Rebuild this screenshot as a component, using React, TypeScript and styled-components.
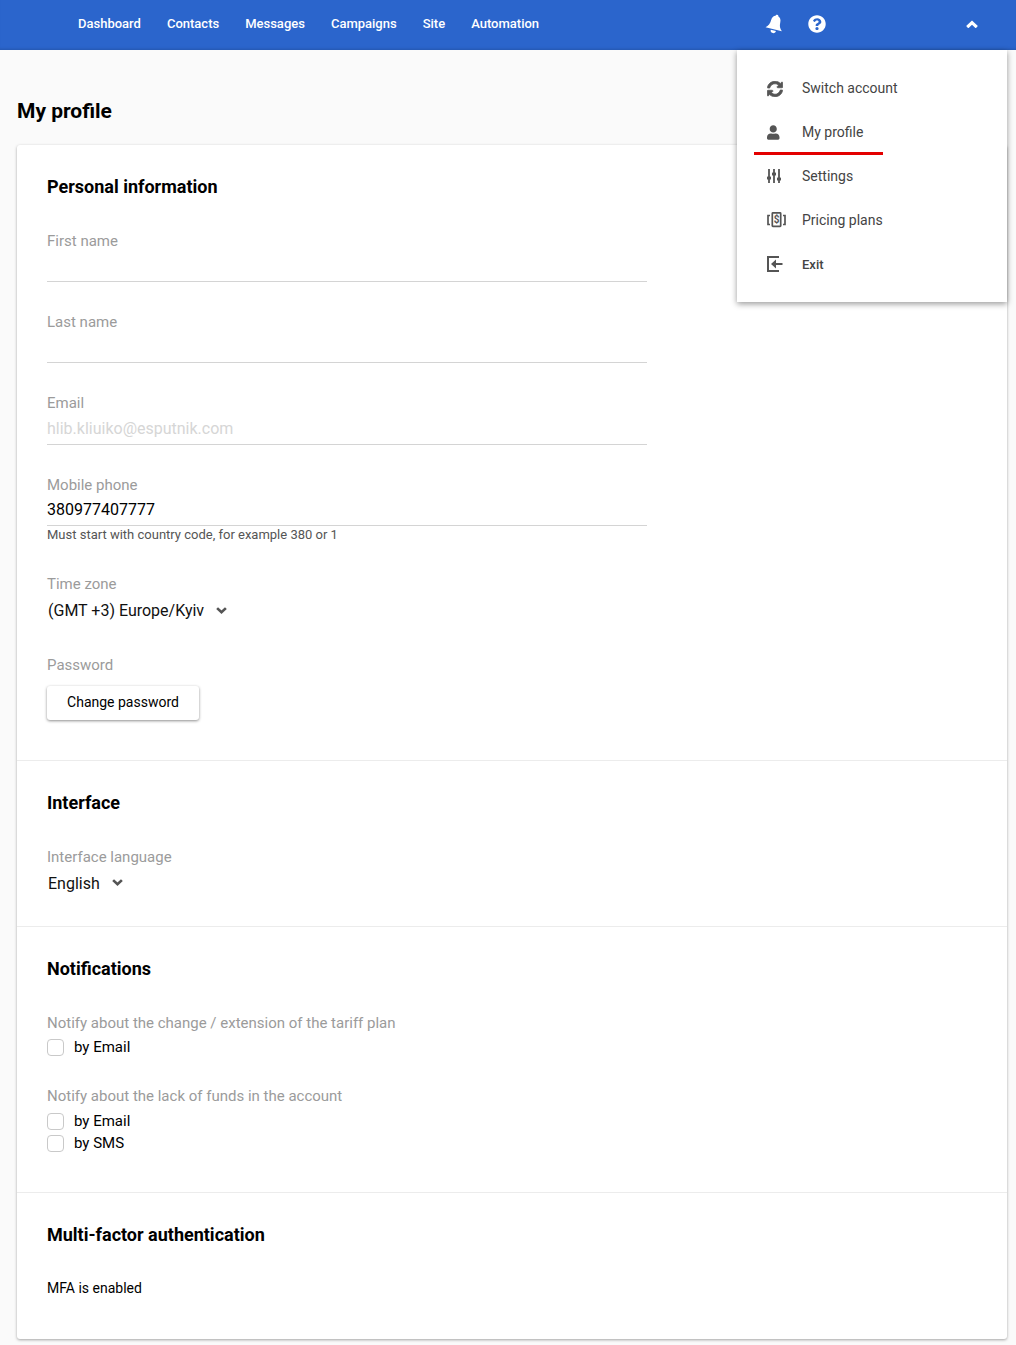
import React from "react";
import styled, { createGlobalStyle } from "styled-components";
import { FaQuestionCircle, FaSyncAlt, FaUser } from "react-icons/fa";

const Global = createGlobalStyle`
  html, body { margin: 0; padding: 0; background: #fafafa; }
  body { font-family: Roboto, "Liberation Sans", sans-serif; color: #000; }
  * { box-sizing: border-box; }
`;

const Page = styled.div`
  position: relative;
  width: 1016px;
  height: 1345px;
  overflow: hidden;
`;

const Header = styled.header`
  height: 50px;
  background: #2b65cc;
  display: flex;
  align-items: center;
  padding-left: 78px;
  color: #fff;
  box-shadow: inset 0 -3px 3px -2px rgba(0, 0, 0, 0.15);
`;

const Nav = styled.nav`
  display: flex;
  gap: 26px;
  width: 670px;
`;

const NavLink = styled.a`
  font-size: 13px;
  font-weight: 500;
  line-height: 20px;
  margin-top: -3px;
  color: #fff;
`;

const HeaderIcons = styled.div`
  display: flex;
  align-items: center;
  color: #fff;
  margin-top: -2px;
`;

const BellWrap = styled.span`
  display: flex;
  transform: rotate(14deg);
  margin-left: 18px;
  margin-top: -1px;
`;

const HelpWrap = styled.span`
  display: flex;
  font-size: 18px;
  margin-left: 24px;
`;

const CaretWrap = styled.span`
  display: flex;
  margin-left: 140px;
`;

const Main = styled.main`
  padding: 0 9px 0 17px;
`;

const Title = styled.h1`
  margin: 0;
  padding-top: 47px;
  height: 95px;
  font-size: 21px;
  line-height: 28px;
  font-weight: 700;
`;

const Card = styled.div`
  background: #fff;
  border-radius: 3px;
  box-shadow: 0 1px 3px rgba(0, 0, 0, 0.35);
  height: 1194px;
`;

const Section = styled.section<{ $h: number }>`
  height: ${(p) => p.$h}px;
  padding: 30px 30px 0;
  border-bottom: 1px solid #ececec;
  &:last-child { border-bottom: none; }
`;

const SectionTitle = styled.h2`
  margin: 0;
  font-size: 18px;
  line-height: 24px;
  font-weight: 700;
`;

const Field = styled.div<{ $mt?: number }>`
  margin-top: ${(p) => p.$mt ?? 30}px;
  width: 600px;
`;

const Label = styled.div`
  font-size: 15px;
  line-height: 20px;
  color: #9b9b9b;
`;

const InputLine = styled.div<{ $disabled?: boolean }>`
  height: 31.33px;
  border-bottom: 1px solid #d4d4d4;
  font-size: 16px;
  line-height: 27px;
  padding-top: 1.3px;
  color: ${(p) => (p.$disabled ? "#d6d6d6" : "#000")};
`;

const Helper = styled.div`
  font-size: 13px;
  line-height: 18px;
  color: #555;
`;

const SelectRow = styled.div<{ $pt?: number }>`
  display: flex;
  align-items: center;
  gap: 12px;
  height: 32px;
  padding-left: 1px;
  padding-top: ${(p) => p.$pt ?? 0}px;
  font-size: 16px;
  color: #111;
`;

const SelectCaret = styled.span`
  display: flex;
  color: #555;
`;

const Button = styled.button`
  display: block;
  margin-top: 11px;
  width: 152px;
  height: 34px;
  background: #fff;
  border: none;
  border-radius: 3px;
  box-shadow: 0 1px 3px rgba(0, 0, 0, 0.45);
  font-family: inherit;
  font-size: 14px;
  color: #000;
  padding: 0 0 2px;
`;

const CheckList = styled.div<{ $mt: number }>`
  margin-top: ${(p) => p.$mt}px;
`;

const CheckRow = styled.label`
  display: flex;
  align-items: center;
  gap: 10px;
  height: 22px;
  font-size: 15px;
`;

const Box = styled.span`
  width: 17px;
  height: 17px;
  border: 1px solid #c9c9c9;
  border-radius: 4px;
  background: #fff;
`;

const Plain = styled.div`
  margin-top: 31px;
  font-size: 14px;
  line-height: 20px;
`;

const Menu = styled.div`
  position: absolute;
  top: 50px;
  left: 737px;
  width: 270px;
  height: 252px;
  padding-top: 16px;
  background: #fff;
  box-shadow: 0 2px 6px rgba(0, 0, 0, 0.4);
`;

const MenuItem = styled.div<{ $bold?: boolean }>`
  position: relative;
  display: flex;
  align-items: center;
  height: 44px;
  padding-left: 30px;
  font-size: ${(p) => (p.$bold ? 13 : 14)}px;
  font-weight: ${(p) => (p.$bold ? 500 : 400)};
  color: #444;
`;

const MenuIcon = styled.span`
  display: flex;
  align-items: center;
  width: 35px;
  color: #555;
  font-size: 15px;
`;

const SyncIcon = styled(FaSyncAlt)`
  width: 16px;
  height: 16px;
  margin-top: 2px;
  stroke: currentColor;
  stroke-width: 24px;
`;

const UserIcon = styled(FaUser)`
  width: 12.5px;
  height: 15px;
`;

const Underline = styled.span`
  position: absolute;
  left: 17px;
  bottom: -1px;
  width: 129px;
  height: 3px;
  background: #e30000;
`;

const BellIcon = () => (
  <svg width="18" height="20" viewBox="0 0 18 20" fill="currentColor">
    <path d="M9 0.5C8 0.5 7.6 1.2 7.5 1.9C5.6 2.5 4.3 4.4 4.3 7C4.3 11 3 13.3 0.6 15.4H17.4C15 13.3 13.7 11 13.7 7C13.7 4.4 12.4 2.5 10.5 1.9C10.4 1.2 10 0.5 9 0.5Z" />
    <path d="M6.3 16.6a2.7 2.7 0 0 0 5.4 0z" />
  </svg>
);

const Chevron = ({ dir, size, weight }: { dir: "up" | "down"; size: number; weight: number }) => (
  <svg width={size} height={size * 0.7} viewBox="0 0 10 7" fill="none" stroke="currentColor" strokeWidth={weight}>
    <path d={dir === "up" ? "M1 6L5 2.2L9 6" : "M1 1L5 4.8L9 1"} />
  </svg>
);

const SlidersIcon = () => (
  <svg width="14" height="14" viewBox="0 0 14 14" fill="currentColor">
    <rect x="1.1" y="0" width="1.8" height="14" />
    <rect x="0" y="7.5" width="4" height="3" rx="0.6" />
    <rect x="6.1" y="0" width="1.8" height="14" />
    <rect x="5" y="3.5" width="4" height="3" rx="0.6" />
    <rect x="11.1" y="0" width="1.8" height="14" />
    <rect x="10" y="8.5" width="4" height="3" rx="0.6" />
  </svg>
);

const PricingIcon = () => (
  <svg width="19" height="16" viewBox="0 0 19 16" fill="none" stroke="currentColor" strokeWidth="1.7">
    <rect x="5.3" y="0.9" width="8.4" height="13.4" rx="0.6" />
    <path d="M3 3.5H1V12.5H3M16 3.5H18V12.5H16" />
    <text x="9.5" y="11.4" fontSize="10" fontWeight="700" textAnchor="middle" fill="currentColor" stroke="none" fontFamily="Roboto">$</text>
  </svg>
);

const ExitIcon = () => (
  <svg width="16" height="16" viewBox="0 0 16 16" fill="none" stroke="currentColor">
    <path d="M12 1H1V15H12" strokeWidth="2" />
    <path d="M15.5 8H7" strokeWidth="2" />
    <path d="M4 8L9 3.5V12.5Z" fill="currentColor" stroke="none" />
  </svg>
);

const nav = ["Dashboard", "Contacts", "Messages", "Campaigns", "Site", "Automation"];

export default function App() {
  return (
    <Page>
      <Global />
      <Header>
        <Nav>
          {nav.map((n) => (
            <NavLink key={n}>{n}</NavLink>
          ))}
        </Nav>
        <HeaderIcons>
          <BellWrap><BellIcon /></BellWrap>
          <HelpWrap><FaQuestionCircle /></HelpWrap>
          <CaretWrap><Chevron dir="up" size={12} weight={2.6} /></CaretWrap>
        </HeaderIcons>
      </Header>
      <Main>
        <Title>My profile</Title>
        <Card>
          <Section $h={616}>
            <SectionTitle>Personal information</SectionTitle>
            <Field $mt={31.67}>
              <Label>First name</Label>
              <InputLine />
            </Field>
            <Field>
              <Label>Last name</Label>
              <InputLine />
            </Field>
            <Field>
              <Label>Email</Label>
              <InputLine $disabled>hlib.kliuiko@esputnik.com</InputLine>
            </Field>
            <Field>
              <Label>Mobile phone</Label>
              <InputLine>380977407777</InputLine>
              <Helper>Must start with country code, for example 380 or 1</Helper>
            </Field>
            <Field $mt={30}>
              <Label>Time zone</Label>
              <SelectRow $pt={2}>
                (GMT +3) Europe/Kyiv
                <SelectCaret><Chevron dir="down" size={11} weight={2.4} /></SelectCaret>
              </SelectRow>
            </Field>
            <Field $mt={29}>
              <Label>Password</Label>
              <Button>Change password</Button>
            </Field>
          </Section>
          <Section $h={166}>
            <SectionTitle>Interface</SectionTitle>
            <Field $mt={32}>
              <Label>Interface language</Label>
              <SelectRow>
                English
                <SelectCaret><Chevron dir="down" size={11} weight={2.4} /></SelectCaret>
              </SelectRow>
            </Field>
          </Section>
          <Section $h={266}>
            <SectionTitle>Notifications</SectionTitle>
            <Field $mt={32}>
              <Label>Notify about the change / extension of the tariff plan</Label>
              <CheckList $mt={3}><CheckRow><Box />by Email</CheckRow></CheckList>
            </Field>
            <Field $mt={28}>
              <Label>Notify about the lack of funds in the account</Label>
              <CheckList $mt={4}>
                <CheckRow><Box />by Email</CheckRow>
                <CheckRow><Box />by SMS</CheckRow>
              </CheckList>
            </Field>
          </Section>
          <Section $h={146}>
            <SectionTitle>Multi-factor authentication</SectionTitle>
            <Plain>MFA is enabled</Plain>
          </Section>
        </Card>
      </Main>
      <Menu>
        <MenuItem><MenuIcon><SyncIcon /></MenuIcon>Switch account</MenuItem>
        <MenuItem><MenuIcon><UserIcon /></MenuIcon>My profile<Underline /></MenuItem>
        <MenuItem><MenuIcon><SlidersIcon /></MenuIcon>Settings</MenuItem>
        <MenuItem><MenuIcon><PricingIcon /></MenuIcon>Pricing plans</MenuItem>
        <MenuItem $bold><MenuIcon><ExitIcon /></MenuIcon>Exit</MenuItem>
      </Menu>
    </Page>
  );
}
